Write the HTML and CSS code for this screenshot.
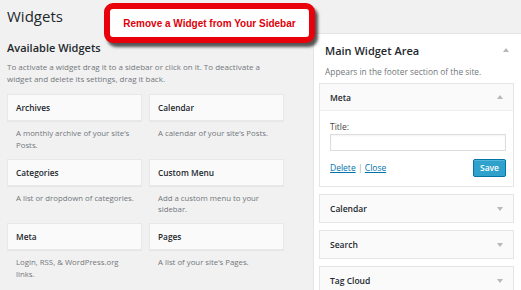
FILE: index.html
```html
<!DOCTYPE html>
<html>
<head>
<meta charset="utf-8">
<link rel="stylesheet" href="styles.css">
</head>
<body>
<div class="page">
  <div class="left">
    <h1 class="title">Widgets</h1>
    <h2 class="avail">Available Widgets</h2>
    <p class="intro">To activate a widget drag it to a sidebar or click on it. To deactivate a widget and delete its settings, drag it back.</p>
    <div class="grid">
      <div class="item"><div class="item-top">Archives</div><div class="item-desc">A monthly archive of your site’s Posts.</div></div>
      <div class="item"><div class="item-top">Calendar</div><div class="item-desc">A calendar of your site’s Posts.</div></div>
      <div class="item"><div class="item-top">Categories</div><div class="item-desc">A list or dropdown of categories.</div></div>
      <div class="item"><div class="item-top">Custom Menu</div><div class="item-desc">Add a custom menu to your sidebar.</div></div>
      <div class="item"><div class="item-top">Meta</div><div class="item-desc">Login, RSS, &amp; WordPress.org links.</div></div>
      <div class="item"><div class="item-top">Pages</div><div class="item-desc">A list of your site’s Pages.</div></div>
    </div>
  </div>
  <div class="panel">
    <div class="panel-head">
      <span class="panel-name">Main Widget Area</span>
      <span class="arrow up"></span>
    </div>
    <div class="panel-desc">Appears in the footer section of the site.</div>
    <div class="widget open">
      <div class="widget-top"><span>Meta</span><span class="arrow up"></span></div>
      <div class="widget-inside">
        <label class="lbl">Title:</label>
        <div class="input"></div>
        <div class="actions">
          <div class="links"><a href="#">Delete</a> <span class="sep">|</span> <a href="#">Close</a></div>
          <button class="save">Save</button>
        </div>
      </div>
    </div>
    <div class="widget"><div class="widget-top"><span>Calendar</span><span class="arrow down"></span></div></div>
    <div class="widget"><div class="widget-top"><span>Search</span><span class="arrow down"></span></div></div>
    <div class="widget"><div class="widget-top"><span>Tag Cloud</span><span class="arrow down"></span></div></div>
  </div>
</div>
<div class="callout">Remove a Widget from Your Sidebar</div>
</body>
</html>
```

FILE: styles.css
```css
html, body {
  margin: 0;
  padding: 0;
  background: #f1f1f1;
  font-family: "Open Sans", "Liberation Sans", sans-serif;
  color: #23282d;
  overflow: hidden;
}
.page {
  display: flex;
  align-items: flex-start;
  width: 521px;
  height: 290px;
  overflow: hidden;
}
.left {
  width: 277px;
  padding-left: 7px;
  flex: none;
}
.title {
  margin: 0;
  padding-top: 5px;
  font-size: 15px;
  font-weight: 400;
  line-height: 22px;
}
.avail {
  margin: 13px 0 0;
  font-size: 11px;
  font-weight: 600;
  line-height: 16px;
}
.intro {
  margin: 5px 0 0;
  font-size: 8px;
  line-height: 12px;
  color: #72777c;
}
.grid {
  margin-top: 9px;
  display: grid;
  grid-template-columns: 135px 135px;
  column-gap: 7px;
}
.item-top {
  height: 27px;
  box-sizing: border-box;
  background: #fafafa;
  border: 1px solid #e8e8e8;
  box-shadow: 0 1px 1px rgba(0,0,0,0.04);
  padding-left: 8px;
  font-size: 8.3px;
  font-weight: 600;
  line-height: 25px;
}
.item-desc {
  padding: 7px 4px 6.5px 9px;
  height: 24px;
  font-size: 7.8px;
  line-height: 11.5px;
  color: #72777c;
}
.panel {
  margin-left: 29px;
  margin-top: 33px;
  width: 208px;
  height: 300px;
  box-sizing: border-box;
  flex: none;
  background: #fff;
  border: 1px solid #e5e5e5;
  border-right: 0;
  padding: 0 7px 0 5px;
}
.panel-head {
  display: flex;
  justify-content: space-between;
  align-items: center;
  height: 32px;
  padding: 0 5px 0 6px;
}
.panel-name {
  font-size: 11px;
  font-weight: 600;
}
.panel-desc {
  padding-left: 6px;
  font-size: 8.4px;
  line-height: 12px;
  color: #72777c;
  margin-bottom: 5px;
}
.widget {
  margin-bottom: 7px;
  border: 1px solid #e5e5e5;
  background: #fff;
}
.widget-top {
  height: 27px;
  box-sizing: border-box;
  background: #fafafa;
  display: flex;
  justify-content: space-between;
  align-items: center;
  padding: 0 10px 0 10px;
  font-size: 8.5px;
  font-weight: 600;
}
.widget.open .widget-top {
  border-bottom: 1px solid #eee;
}
.widget-inside {
  padding: 10px 7px 9px 10px;
}
.lbl {
  display: block;
  font-size: 8.5px;
  line-height: 12px;
  color: #444;
}
.input {
  margin-top: 1px;
  height: 17px;
  box-sizing: border-box;
  border: 1px solid #ddd;
  background: #fff;
  box-shadow: inset 0 1px 2px rgba(0,0,0,0.05);
}
.actions {
  display: flex;
  justify-content: space-between;
  align-items: center;
  margin-top: 8px;
}
.links {
  font-size: 8.5px;
  line-height: 12px;
  color: #a0a5aa;
}
.links a {
  color: #0073aa;
  text-decoration: underline;
}
.save {
  height: 18px;
  padding: 0 6px;
  border: 1px solid #0074a2;
  border-radius: 2px;
  background: #2ea2cc;
  color: #fff;
  font-family: "Open Sans", "Liberation Sans", sans-serif;
  font-size: 8.5px;
  font-weight: 600;
  line-height: 16px;
  box-shadow: inset 0 1px 0 rgba(120,200,230,0.5);
}
.arrow {
  width: 0;
  height: 0;
  border-left: 3px solid transparent;
  border-right: 3px solid transparent;
}
.arrow.up {
  border-bottom: 4px solid #b4b9be;
}
.arrow.down {
  border-top: 4px solid #b4b9be;
}
.callout {
  position: absolute;
  left: 104px;
  top: 3px;
  width: 211px;
  height: 40px;
  box-sizing: border-box;
  border: 6px solid #e8000b;
  border-radius: 9px;
  background: #fff;
  box-shadow: 3px 4px 3px rgba(0,0,0,0.65);
  font-family: "Liberation Sans", Arial, sans-serif;
  font-weight: 700;
  font-size: 10px;
  color: #e0000a;
  display: flex;
  align-items: center;
  justify-content: center;
}
```
